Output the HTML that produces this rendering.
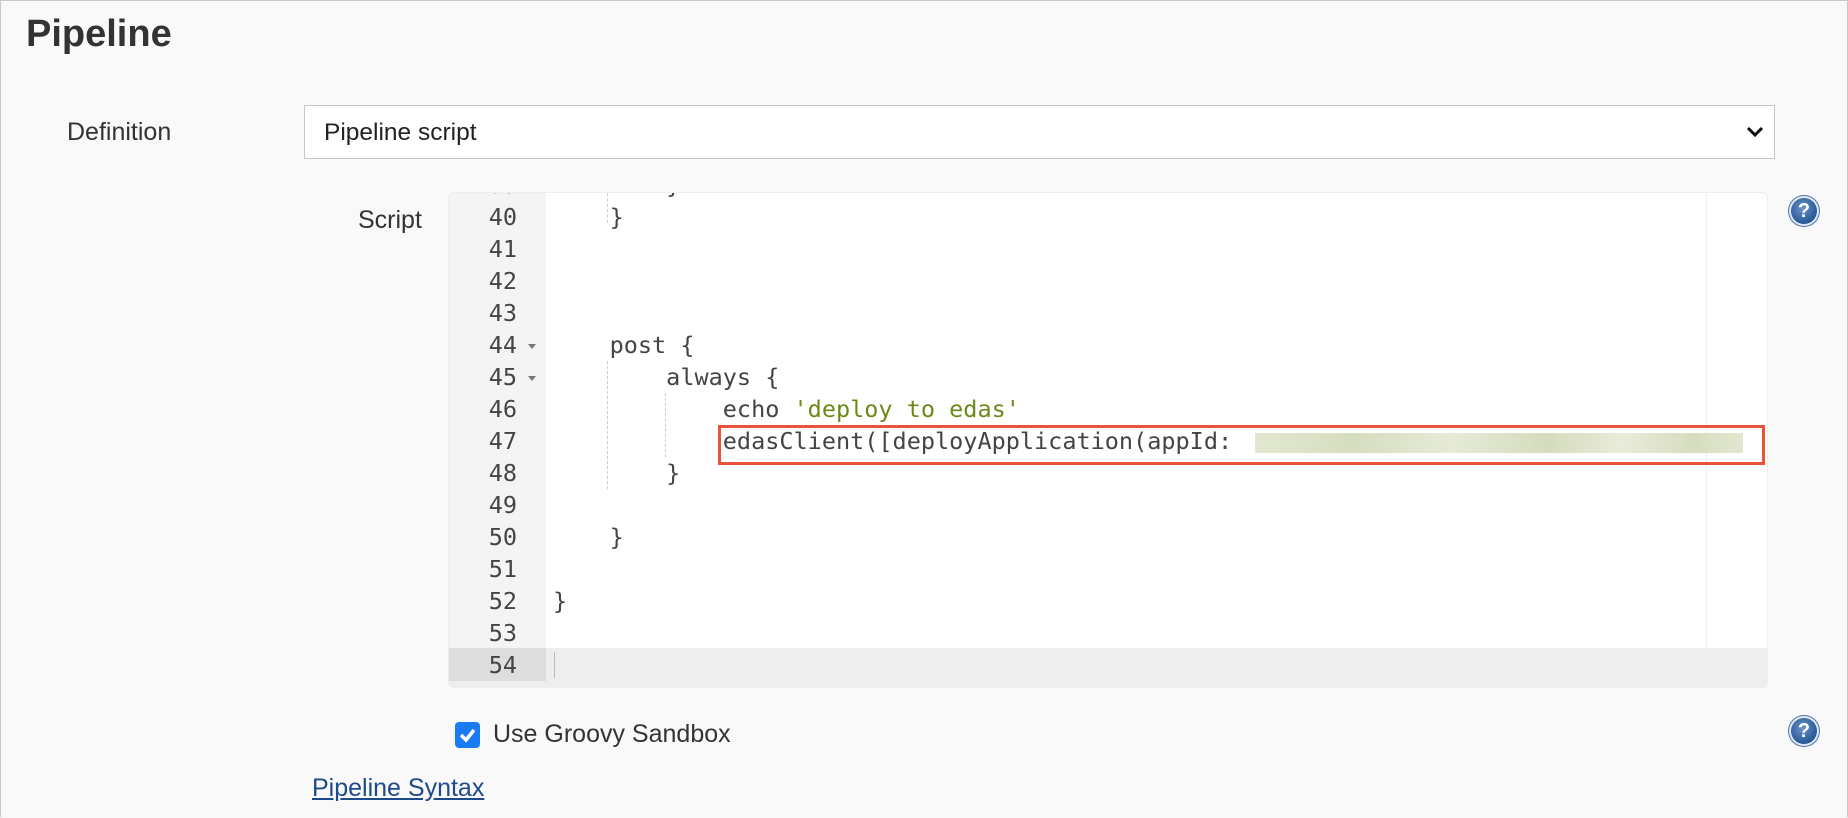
<!DOCTYPE html>
<html><head><meta charset="utf-8"><style>
html,body{margin:0;padding:0}
body{width:1848px;height:818px;position:relative;background:#f9f9f9;font-family:"Liberation Sans",Arial,sans-serif;color:#333;overflow:hidden}
.frame{position:absolute;left:0;top:0;width:1846px;height:816px;border:1px solid #c8c8c8;border-bottom:none}
.abs{position:absolute;white-space:nowrap}
h1{position:absolute;left:26px;top:13px;margin:0;font-size:38px;font-weight:bold;color:#333}
.lbl{font-size:25px;color:#333}
.sel{position:absolute;left:304px;top:105px;width:1471px;height:54px;border:1px solid #c6c6c6;background:#fff;box-sizing:border-box}
.ed{position:absolute;left:448px;top:192px;width:1320px;height:496px;background:#fff;border-radius:6px;overflow:hidden;border:1px solid #eee;box-sizing:border-box}
.gut{position:absolute;left:0;top:0;width:97px;height:100%;background:#f4f4f4}
.code{font-family:"DejaVu Sans Mono","Liberation Mono",monospace;font-size:23.5px;color:#444;line-height:32px}
.ln{position:absolute;left:0;width:68px;text-align:right}
.tx{position:absolute;left:104px;white-space:pre}
.str{color:#6b8a1a}
.guide{position:absolute;width:0;border-left:1px dashed #ccc}
.help{position:absolute;width:30px;height:30px;border-radius:50%;background:radial-gradient(circle at 45% 40%,#6a93c8,#2a5a9a 60%,#1e4a85);box-shadow:0 0 0 2px #dfe7f1 inset,0 0 0 1px #4b72a8;color:#fff;font-weight:bold;font-size:20px;text-align:center;line-height:30px}
</style></head><body>
<div class="frame"></div>
<h1>Pipeline</h1>
<div class="abs lbl" style="left:67px;top:118px">Definition</div>
<div class="sel"><span class="abs" style="left:19px;top:13px;font-size:24.5px;color:#222">Pipeline script</span>
<svg class="abs" style="right:10px;top:20px" width="18" height="12" viewBox="0 0 18 12"><path d="M2 2 L9 9 L16 2" fill="none" stroke="#111" stroke-width="3"/></svg></div>
<div class="abs lbl" style="left:358px;top:206px">Script</div>
<div class="ed code">
<div class="gut"></div>
<div class="abs" style="left:1257px;top:0;height:455px;border-left:1px solid #eee"></div>
<div class="abs" style="left:0;top:455px;width:100%;height:41px;background:#eee"></div>
<div class="abs" style="left:0;top:455px;width:97px;height:33px;background:#ddd"></div>
<div class="abs" style="left:105px;top:459px;height:26px;border-left:1px solid #bbb"></div>
<div class="ln" style="top:-24px">39</div><div class="tx" style="top:-24px">        }</div>
<div class="ln" style="top:8px">40</div><div class="tx" style="top:8px">    }</div>
<div class="ln" style="top:40px">41</div>
<div class="ln" style="top:72px">42</div>
<div class="ln" style="top:104px">43</div>
<div class="ln" style="top:136px">44</div><div class="tx" style="top:136px">    post {</div>
<div class="ln" style="top:168px">45</div><div class="tx" style="top:168px">        always {</div>
<div class="ln" style="top:200px">46</div><div class="tx" style="top:200px">            echo <span class="str">'deploy to edas'</span></div>
<div class="ln" style="top:232px">47</div><div class="tx" style="top:232px">            edasClient([deployApplication(appId: </div>
<div class="ln" style="top:264px">48</div><div class="tx" style="top:264px">        }</div>
<div class="ln" style="top:296px">49</div>
<div class="ln" style="top:328px">50</div><div class="tx" style="top:328px">    }</div>
<div class="ln" style="top:360px">51</div>
<div class="ln" style="top:392px">52</div><div class="tx" style="top:392px">}</div>
<div class="ln" style="top:424px">53</div>
<div class="ln" style="top:456px">54</div>
<svg class="abs" style="left:78px;top:149px" width="10" height="40"><path d="M1 2 L9 2 L5 7Z M1 34 L9 34 L5 39Z" fill="#777"/></svg>
<div class="guide" style="left:158px;top:0;height:30px"></div>
<div class="guide" style="left:158px;top:168px;height:128px"></div>
<div class="guide" style="left:216px;top:200px;height:64px"></div>
<div class="abs" style="left:806px;top:240px;width:488px;height:20px;background:linear-gradient(90deg,#e2e8d0,#d6ddbf 20%,#e6ebd8 40%,#d5dcbd 60%,#e8ecda 75%,#d6ddbf 90%,#e2e8d0)"></div>
<div class="abs" style="left:269px;top:232px;width:1041px;height:34px;border:3px solid #e9533a"></div>
</div>
<div class="help" style="left:1789px;top:196px">?</div>
<div class="help" style="left:1789px;top:716px">?</div>
<div class="abs" style="left:455px;top:722px;width:25px;height:26px;background:#1a7cf5;border-radius:4px"><svg width="25" height="26"><path d="M6 13 L11 18 L19 8" fill="none" stroke="#fff" stroke-width="3.5"/></svg></div>
<div class="abs lbl" style="left:493px;top:720px">Use Groovy Sandbox</div>
<div class="abs" style="left:312px;top:774px;font-size:25px;color:#1e4a8a;text-decoration:underline">Pipeline Syntax</div>
</body></html>
